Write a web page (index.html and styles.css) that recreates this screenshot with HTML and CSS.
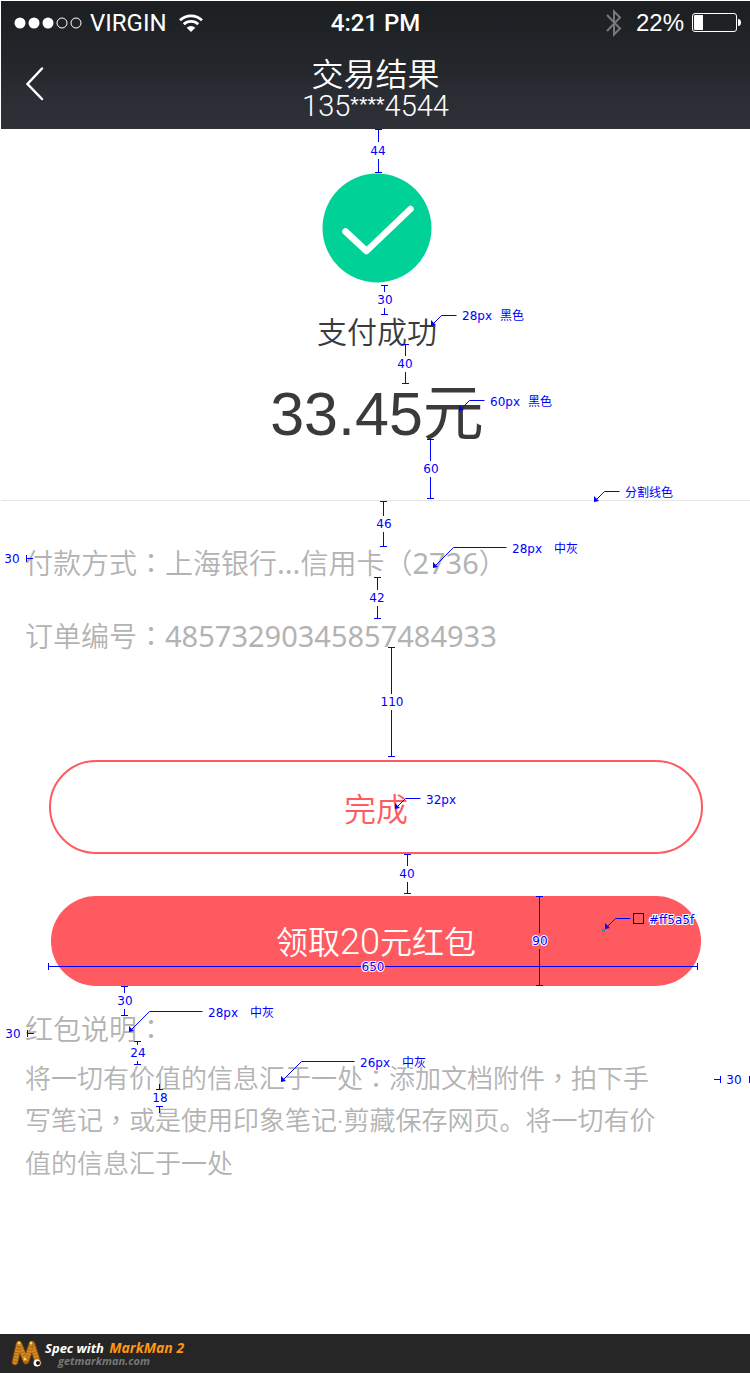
FILE: index.html
```html
<!DOCTYPE html>
<html lang="zh-CN">
<head>
<meta charset="utf-8">
<meta name="viewport" content="width=device-width">
<title>交易结果</title>
<link rel="stylesheet" href="styles.css">
</head>
<body>
<div class="page">
  <header class="header">
    <div class="status">
      <div class="status-left">
        <svg class="signal" width="68" height="12" viewBox="0 0 68 12" aria-hidden="true">
          <g fill="#fff"><circle cx="6" cy="6" r="5.5"/><circle cx="20" cy="6" r="5.5"/><circle cx="34" cy="6" r="5.5"/></g>
          <g fill="none" stroke="#fff"><circle cx="48" cy="6" r="5"/><circle cx="62" cy="6" r="5"/></g>
        </svg>
        <span class="carrier">VIRGIN</span>
        <svg class="wifi" width="24" height="18" viewBox="0 0 24 18" aria-hidden="true">
          <g fill="none" stroke="#fff" stroke-width="2.8"><path d="M1 6.2A16 16 0 0 1 23 6.2"/><path d="M4.800 10.200A10.500 10.500 0 0 1 19.200 10.200"/></g>
          <path d="M12 18L7.700 13.700A6.200 6.200 0 0 1 16.300 13.700Z" fill="#fff"/>
        </svg>
      </div>
      <div class="clock">4:21 PM</div>
      <div class="status-right">
        <svg class="bluetooth" width="16" height="28" viewBox="0 0 16 28" fill="none" stroke="#77787b" stroke-width="2" aria-hidden="true"><path d="M1 6L14 19.500L8 25.500V2.500L14 8.500L1 22"/></svg>
        <span class="percent">22%</span>
        <svg width="50" height="20" viewBox="0 0 50 20" aria-hidden="true">
          <rect x="0.500" y="0.500" width="44" height="18" rx="2.500" fill="none" stroke="#fff"/>
          <path d="M3 2H11V17H3Q2 17 2 16V3Q2 2 3 2Z" fill="#fff"/><path d="M46 6Q49 6 49 9.500T46 13Z" fill="#fff"/>
        </svg>
      </div>
    </div>
    <div class="navbar">
      <button class="back" type="button" aria-label="返回">
        <svg width="20" height="36" viewBox="0 0 20 36" fill="none" stroke="#fff" stroke-width="2.500" stroke-linecap="round"><path d="M17 2.500L2.500 18L17 33"/></svg>
      </button>
      <div class="heading">
        <h1>交易结果</h1>
        <p>135<span class="mask">****</span>4544</p>
      </div>
    </div>
  </header>

  <main>
    <section class="result">
      <svg class="tick" width="110" height="110" viewBox="0 0 110 110" aria-hidden="true">
        <circle cx="55" cy="55" r="54.500" fill="#00d197"/>
        <path d="M23.500 58.500L44.500 78L88.500 36" fill="none" stroke="#fff" stroke-width="6.500" stroke-linecap="round" stroke-linejoin="round"/>
      </svg>
      <p class="state">支付成功</p>
      <p class="amount">33.45元</p>
    </section>
    <section class="details">
      <p>付款方式<span class="mid" lang="zh-TW">：</span>上海银行<span class="latin">...</span>信用卡<span class="mid" lang="zh-TW">（</span><span class="latin">2736</span><span class="mid" lang="zh-TW">）</span></p>
      <p>订单编号<span class="mid" lang="zh-TW">：</span><span class="latin">48573290345857484933</span></p>
    </section>
    <div class="actions">
      <button class="btn outline" type="button">完成</button>
      <button class="btn solid" type="button">领取<span class="count">20</span>元红包</button>
    </div>
    <section class="notes">
      <h2>红包说明<span class="mid" lang="zh-TW">：</span></h2>
      <p>将一切有价值的信息汇于一处<span class="mid" lang="zh-TW">：</span>添加文档附件<span class="mid" lang="zh-TW">，</span>拍下手写笔记<span class="mid" lang="zh-TW">，</span>或是使用印象笔记<span class="latin-dot">·</span>剪藏保存网页。将一切有价值的信息汇于一处</p>
    </section>
  </main>

  <footer class="footer">
    <svg width="34" height="30" viewBox="0 0 34 30" aria-hidden="true">
      <g fill="none" stroke-linecap="round" stroke-linejoin="round">
        <path d="M5 23L9 5L16 22L22 5L28 24" stroke="#6d3f0a" stroke-width="7"/>
        <path d="M5 23L9 5L16 22L22 5L28 24" stroke="#d58a26" stroke-width="5"/>
        <path d="M5 23L9 5L16 22L22 5L28 24" stroke="#a86818" stroke-width="5" stroke-linecap="butt" stroke-dasharray="1 2"/>
      </g>
      <g fill="#ffd75e"><circle cx="9" cy="4" r="1.500"/><circle cx="21" cy="4" r="1.500"/><circle cx="15" cy="20" r="1.500"/></g>
      <circle cx="27" cy="24" r="3.500" fill="#fff"/><circle cx="28" cy="24" r="2" fill="#111"/>
    </svg>
    <div class="credit">
      <p class="spec">Spec with <span>MarkMan 2</span></p>
      <p class="site">getmarkman.com</p>
    </div>
  </footer>

  <svg class="marks" width="750" height="1373" viewBox="0 0 750 1373">
    <g class="rule">
      <path d="M375 129.500h7M378.500 129v13M378.500 159v13M375 172.500h7"/>
      <path d="M381 285.500h7M384.500 285v7M384.500 308v7M381 314.500h7"/>
      <path d="M402 344.500h7M405.500 344v12M405.500 372v12M402 383.500h7"/>
      <path d="M427 439.500h7M430.500 439v22M430.500 477v22M427 498.500h7"/>
      <path d="M380 501.500h7M383.500 501v15M383.500 532v15M380 546.500h7"/>
      <path d="M374 577.500h7M377.500 577v13M377.500 606v13M374 618.500h7"/>
      <path d="M388 647.500h7M391.500 647v47M391.500 710v47M388 756.500h7"/>
      <path d="M404 854.500h7M407.500 854v12M407.500 882v12M404 893.500h7"/>
      <path d="M536 896.500h7M539.500 896v37M539.500 949v37M536 985.500h7"/>
      <path d="M121 986.500h7M124.500 986v7M124.500 1009v7M121 1015.500h7"/>
      <path d="M134 1041.500h7M137.500 1041v4M137.500 1061v4M134 1064.500h7"/>
      <path d="M156 1089.500h7M159.500 1084v6M159.500 1106v7M156 1106.500h7"/>
      <path d="M26.500 555v7M26 558.500h7M27.500 1030v7M27 1033.500h7"/>
      <path d="M714 1079.500h7M720.500 1076v7M749.500 1076v7"/>
      <path d="M48.500 963v7M48 966.500h313M385 966.500h312M697.500 963v7"/>
      <path d="M431.500 325.500l10-10h15M459.500 410.500l10-10h15M594.500 501.500l10-10h15M433.500 567.500l20-20h53M395.500 808.500l10-10h15M605.500 928.500l10-10h15M129.500 1031.500l20-20h53M281.500 1081.500l20-20h53"/>
    </g>
    <path class="tips" d="M431 326v-6l5 5zM459 411v-6l5 5zM594 502v-6l5 5zM433 568v-6l5 5zM395 809v-6l5 5zM605 929v-6l5 5zM129 1032v-6l5 5zM281 1082v-6l5 5z"/>
    <rect x="602.500" y="929.500" width="2" height="2" fill="none" stroke="#28948e"/>
    <rect x="633.500" y="913.500" width="10" height="10" fill="#ff5a5f" stroke="#000"/>
    <g class="size">
      <text x="378" y="155">44</text><text x="385" y="304">30</text><text x="405" y="368">40</text><text x="431" y="473">60</text>
      <text x="384" y="528">46</text><text x="377" y="602">42</text><text x="392" y="706">110</text><text x="407" y="878">40</text>
      <text x="540" y="945">90</text><text x="125" y="1005">30</text><text x="138" y="1057">24</text><text x="160" y="1102">18</text>
      <text x="12" y="563">30</text><text x="13" y="1038">30</text><text x="734" y="1084">30</text><text x="373" y="971">650</text>
    </g>
    <g class="note">
      <text x="462" y="320">28px</text><text x="500" y="320">黑色</text>
      <text x="490" y="406">60px</text><text x="528" y="406">黑色</text>
      <text x="625" y="497">分割线色</text>
      <text x="512" y="553">28px</text><text x="554" y="553">中灰</text>
      <text x="426" y="804">32px</text>
      <text x="649" y="924">#ff5a5f</text>
      <text x="208" y="1017">28px</text><text x="250" y="1017">中灰</text>
      <text x="360" y="1067">26px</text><text x="402" y="1067">中灰</text>
    </g>
  </svg>
</div>
</body>
</html>
```
FILE: styles.css
```css
* { box-sizing: border-box; margin: 0; padding: 0; }
body {
  background: #fff;
  font-family: "Noto Sans CJK SC", sans-serif;
  font-weight: 350;
}
button { font: inherit; cursor: pointer; }
.page { position: relative; padding-top: 1px; overflow: hidden; }

.header {
  margin-left: 1px;
  height: 128px;
  color: #fff;
  background: linear-gradient(#1c1f22, #24272b 55%, #2a2c34 70%, #2f3139);
}
.status {
  display: grid;
  grid-template-columns: 1fr auto 1fr;
  align-items: center;
  height: 44px;
  padding: 0 8px;
  font: 300 24px/28px Roboto, sans-serif;
}
.status-left, .status-right { display: flex; align-items: center; gap: 8px; }
.status-left { padding-left: 5px; }
.status-right { justify-content: flex-end; }
.wifi { margin-left: 4px; }
.bluetooth { margin-right: 6px; }
.carrier { font-weight: 400; }
.clock { font-weight: 500; }
.percent { font: 24px/28px "Liberation Sans", sans-serif; }
.navbar {
  display: grid;
  grid-template-columns: 60px 1fr 60px;
  align-items: center;
  height: 78px;
}
.back {
  display: flex;
  padding: 0 0 0 24px;
  border: 0;
  background: none;
}
.heading { padding-top: 8px; text-align: center; }
.heading h1 { font-size: 32px; line-height: 36px; font-weight: 350; }
.heading p { font: 300 29px/32px Roboto, sans-serif; }
.mask { font-family: "Liberation Sans", sans-serif; font-size: 22px; vertical-align: 4px; line-height: 1; }

.result {
  display: flex;
  flex-direction: column;
  align-items: center;
  margin-left: 1px;
  height: 372px;
  padding: 44px 0 0 3px;
  border-bottom: 1px solid #e5e5e5;
  color: #3a3a3a;
}
.state { margin-top: 27px; font-size: 30px; line-height: 40px; }
.amount {
  margin-top: 24px;
  font: 400 61px/80px "Liberation Sans", "Noto Sans CJK SC", sans-serif;
}
.details {
  display: flex;
  flex-direction: column;
  gap: 32px;
  padding: 41px 25px 0;
  color: #b3b3b3;
  font-size: 28px;
  line-height: 41px;
}
.mid { font-family: "Noto Sans CJK TC", sans-serif; }
.latin { font: 400 29px/40px "Noto Sans", sans-serif; }
.latin-dot { font-family: "Noto Sans", sans-serif; }

.actions {
  display: flex;
  flex-direction: column;
  gap: 42px;
  padding: 104px 47px 0 49px;
}
.btn { font-size: 32px; line-height: 48px; color: #ff5a5f; border-radius: 47px; }
.outline { height: 94px; border: 2px solid #ff5a5f; background: #fff; }
.solid { height: 90px; margin: 0 2px; border: 0; color: #fff; background: #ff5a5f; }
.count { font-family: Roboto, sans-serif; font-size: 36px; font-weight: 300; }

.notes { padding: 22px 80px 151px 25px; color: #b3b3b3; }
.notes h2 { font-size: 28px; line-height: 41px; font-weight: 350; }
.notes p { margin-top: 7px; font-size: 26px; line-height: 42px; }

.footer {
  display: flex;
  align-items: center;
  gap: 1px;
  height: 39px;
  padding-left: 10px;
  background: #262626;
  font-family: "Open Sans", sans-serif;
  font-style: italic;
  font-weight: 700;
}
.spec { color: #fff; font-size: 13px; line-height: 14px; }
.spec span { margin-left: 2px; font-size: 14px; color: #ff9614; }
.site { padding-left: 13px; color: #777; font-size: 11px; line-height: 12px; }

.marks { position: absolute; top: 0; left: 0; pointer-events: none; }
.rule { fill: none; stroke: #00f; }
.tips { fill: #00f; }
.marks text {
  font: 400 12px "DejaVu Sans", "Noto Sans CJK SC", sans-serif;
  fill: #00f;
  stroke: #fff;
  stroke-width: 2px;
  paint-order: stroke;
}
.size { text-anchor: middle; }
```
